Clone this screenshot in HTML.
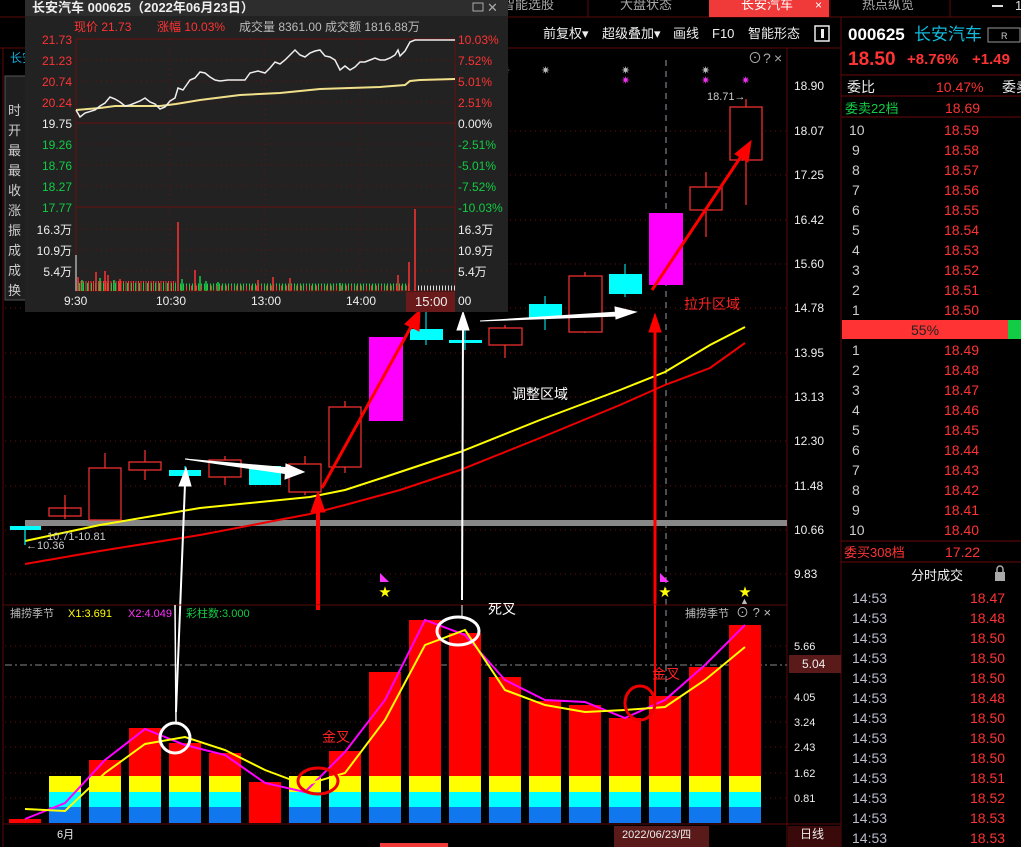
<!DOCTYPE html>
<html><head><meta charset="utf-8"><style>
*{margin:0;padding:0;box-sizing:border-box}
body{width:1021px;height:847px;background:#000;overflow:hidden;position:relative;font-family:"Liberation Sans","Noto Sans CJK SC",sans-serif;color:#ddd}
svg{position:absolute;left:0;top:0}
</style></head><body>
<svg width="1021" height="847" viewBox="0 0 1021 847" font-family="Liberation Sans, Noto Sans CJK SC, sans-serif">
<rect x="0" y="0" width="1021" height="17" fill="#000"/>
<line x1="0" y1="17" x2="1021" y2="17" stroke="#5a0a0a"/>
<line x1="588" y1="0" x2="588" y2="17" stroke="#5a0a0a"/>
<line x1="830" y1="0" x2="830" y2="17" stroke="#5a0a0a"/>
<line x1="950" y1="0" x2="950" y2="17" stroke="#5a0a0a"/>
<rect x="709" y="0" width="120" height="17" fill="#f03a3a"/>
<text x="502" y="9" fill="#aaa" font-size="13">智能选股</text>
<text x="620" y="9" fill="#aaa" font-size="13">大盘状态</text>
<text x="741" y="9" fill="#fff" font-size="13">长安汽车</text>
<text x="815" y="9" fill="#fff" font-size="12">×</text>
<text x="862" y="9" fill="#aaa" font-size="13">热点纵览</text>
<line x1="992" y1="6" x2="1003" y2="6" stroke="#ddd" stroke-width="2"/>
<text x="1015" y="10" fill="#ddd" font-size="13">1</text>
<line x1="0" y1="48" x2="841" y2="48" stroke="#5a0a0a"/>
<text x="543" y="38" fill="#eee" font-size="13">前复权▾</text>
<text x="602" y="38" fill="#eee" font-size="13">超级叠加▾</text>
<text x="673" y="38" fill="#eee" font-size="13">画线</text>
<text x="712" y="38" fill="#eee" font-size="13">F10</text>
<text x="748" y="38" fill="#eee" font-size="13">智能形态</text>
<rect x="815" y="26" width="14" height="15" fill="none" stroke="#eee" stroke-width="1.5"/>
<rect x="821" y="29" width="3" height="9" fill="#eee"/>
<line x1="787" y1="48" x2="787" y2="847" stroke="#5a0a0a"/>
<line x1="841" y1="17" x2="841" y2="847" stroke="#5a0a0a"/>
<line x1="3" y1="48" x2="3" y2="847" stroke="#5a0a0a"/>
<g stroke="#6a1010" stroke-dasharray="1,4">
<line x1="5" y1="131" x2="787" y2="131"/><line x1="5" y1="175" x2="787" y2="175"/>
<line x1="5" y1="220" x2="787" y2="220"/><line x1="5" y1="264" x2="787" y2="264"/>
<line x1="5" y1="308" x2="787" y2="308"/><line x1="5" y1="353" x2="787" y2="353"/>
<line x1="5" y1="397" x2="787" y2="397"/><line x1="5" y1="441" x2="787" y2="441"/>
<line x1="5" y1="486" x2="787" y2="486"/><line x1="5" y1="530" x2="787" y2="530"/>
<line x1="5" y1="574" x2="787" y2="574"/>
<line x1="5" y1="646" x2="787" y2="646"/><line x1="5" y1="697" x2="787" y2="697"/>
<line x1="5" y1="722" x2="787" y2="722"/><line x1="5" y1="747" x2="787" y2="747"/>
<line x1="5" y1="773" x2="787" y2="773"/><line x1="5" y1="798" x2="787" y2="798"/>
</g>
<g fill="#eee" font-size="12">
<text x="794" y="90">18.90</text><text x="794" y="135">18.07</text><text x="794" y="179">17.25</text>
<text x="794" y="224">16.42</text><text x="794" y="268">15.60</text><text x="794" y="312">14.78</text>
<text x="794" y="357">13.95</text><text x="794" y="401">13.13</text><text x="794" y="445">12.30</text>
<text x="794" y="490">11.48</text><text x="794" y="534">10.66</text><text x="794" y="578">9.83</text>
</g>
<g fill="#aaa" font-size="14"><text x="748" y="63">⊙</text><text x="763" y="63">?</text><text x="774" y="63">×</text></g>
<line x1="666" y1="60" x2="666" y2="823" stroke="#99a" stroke-dasharray="6,5"/>
<rect x="25" y="520" width="762" height="6" fill="#888"/>
<polyline fill="none" stroke="#ff0" stroke-width="2" points="25,541 100,525 200,508 310,497 345,490 385,477 460,452 540,420 620,390 665,372 710,345 745,327"/>
<polyline fill="none" stroke="#e00" stroke-width="2" points="25,564 100,551 200,535 310,514 345,505 400,490 460,470 540,438 620,405 665,385 710,368 745,343"/>
<g stroke="#f33" fill="none" stroke-width="1.2">
<line x1="25" y1="530" x2="25" y2="545" stroke="#0ff"/>
<line x1="65" y1="495" x2="65" y2="519"/><rect x="49" y="508" width="32" height="8"/>
<line x1="105" y1="453" x2="105" y2="521"/><rect x="89" y="468" width="32" height="52" fill="#000"/>
<line x1="145" y1="450" x2="145" y2="480"/><rect x="129" y="462" width="32" height="8" fill="#000"/>
<line x1="225" y1="456" x2="225" y2="485"/><rect x="209" y="460" width="32" height="17" fill="#000"/>
<line x1="305" y1="456" x2="305" y2="495"/><rect x="289" y="464" width="32" height="28" fill="#000"/>
<line x1="345" y1="401" x2="345" y2="473"/><rect x="329" y="407" width="32" height="60" fill="#000"/>
<line x1="505" y1="325" x2="505" y2="358"/><rect x="489" y="328" width="33" height="17" fill="#000"/>
<line x1="585" y1="272" x2="585" y2="333"/><rect x="569" y="276" width="33" height="56" fill="#000"/>
<line x1="706" y1="172" x2="706" y2="237"/><rect x="690" y="187" width="32" height="23" fill="#000"/>
<line x1="746" y1="99" x2="746" y2="205"/><rect x="730" y="107" width="32" height="53" fill="#000"/>
</g>
<g stroke="#0ff">
<line x1="426" y1="310" x2="426" y2="345"/><line x1="545" y1="296" x2="545" y2="330"/><line x1="625" y1="264" x2="625" y2="297"/>
<line x1="185" y1="466" x2="185" y2="478"/><line x1="465" y1="320" x2="465" y2="350"/>
</g>
<g fill="#0ff">
<rect x="10" y="526" width="31" height="4"/><rect x="169" y="470" width="32" height="6"/>
<rect x="249" y="466" width="32" height="19"/><rect x="410" y="329" width="33" height="11"/>
<rect x="449" y="340" width="33" height="3"/><rect x="529" y="304" width="33" height="14"/>
<rect x="609" y="274" width="33" height="20"/>
</g>
<rect x="369" y="337" width="34" height="84" fill="#f0f"/>
<rect x="649" y="213" width="34" height="72" fill="#f0f"/>
<text x="47" y="540" fill="#ccc" font-size="11">10.71-10.81</text>
<text x="26" y="549" fill="#ccc" font-size="11">←10.36</text>
<text x="707" y="100" fill="#ccc" font-size="11">18.71→</text>
<g fill="#bbb" font-size="11"><text x="501" y="74">✷</text><text x="541" y="74">✷</text><text x="621" y="74">✷</text><text x="701" y="74">✷</text></g>
<g fill="#e3e" font-size="11"><text x="621" y="84">✷</text><text x="701" y="84">✷</text><text x="741" y="84">✷</text></g>
<g fill="#ff0" font-size="12"><text x="379" y="596">★</text><text x="659" y="596">★</text><text x="739" y="596">★</text></g>
<g fill="#f3f" font-size="9"><text x="380" y="581">◣</text><text x="660" y="581">◣</text></g>
<text x="740" y="604" fill="#bbb" font-size="9">▲</text>
<text x="512" y="399" fill="#fff" font-size="14">调整区域</text>
<text x="684" y="309" fill="#f22" font-size="14">拉升区域</text>
<g stroke="#fff" fill="#fff">
<line x1="176" y1="712" x2="185" y2="484" stroke-width="2"/><polygon points="179,486 191,486 186,468"/>
<line x1="462" y1="600" x2="463" y2="328" stroke-width="2"/><polygon points="457,330 469,330 463,312"/>
<polygon points="185,459 290,468 288,474"/><polygon points="286,464 304,472 285,479"/>
<polygon points="480,321 618,312 618,316"/><polygon points="615,307 636,312 616,319"/>
</g>
<g stroke="#f00" fill="#f00">
<line x1="318" y1="610" x2="318" y2="510" stroke-width="4"/><polygon points="311,512 325,512 318,492"/>
<line x1="655" y1="605" x2="655" y2="330" stroke-width="3"/><polygon points="649,332 661,332 655,314"/>
<line x1="322" y1="488" x2="412" y2="325" stroke-width="3"/><polygon points="405,324 419,331 420,310"/>
<line x1="652" y1="290" x2="742" y2="155" stroke-width="3"/><polygon points="735,154 748,162 751,141"/>
</g>
<rect x="5" y="76" width="22" height="224" fill="#1f1f1f" stroke="#555"/>
<text x="10" y="62" fill="#1ad" font-size="12">长安</text>
<g fill="#ccc" font-size="13">
<text x="8" y="115">时</text><text x="8" y="135">开</text><text x="8" y="155">最</text><text x="8" y="175">最</text><text x="8" y="195">收</text><text x="8" y="215">涨</text><text x="8" y="235">振</text><text x="8" y="255">成</text><text x="8" y="275">成</text><text x="8" y="295">换</text>
</g>
<rect x="25" y="0" width="483" height="312" fill="#222"/>
<rect x="25" y="0" width="483" height="16" fill="#2d2d2d"/>
<text x="32" y="12" fill="#eee" font-size="13" font-weight="bold">长安汽车 000625（2022年06月23日）</text>
<rect x="473" y="3" width="10" height="8" fill="none" stroke="#aaa"/>
<text x="487" y="12" fill="#aaa" font-size="13">✕</text>
<text x="74" y="31" fill="#f33" font-size="12">现价 21.73</text>
<text x="157" y="31" fill="#f33" font-size="12">涨幅 10.03%</text>
<text x="239" y="31" fill="#bbb" font-size="12">成交量 8361.00  成交额 1816.88万</text>
<line x1="76" y1="39" x2="455" y2="39" stroke="#6a1010"/>
<line x1="76" y1="123" x2="455" y2="123" stroke="#6a1010"/>
<line x1="76" y1="207" x2="455" y2="207" stroke="#6a1010"/>
<line x1="76" y1="291" x2="455" y2="291" stroke="#6a1010"/>
<line x1="76" y1="39" x2="76" y2="291" stroke="#6a1010"/>
<line x1="455" y1="39" x2="455" y2="291" stroke="#6a1010"/>
<g stroke="#6a1010" stroke-dasharray="1,4">
<line x1="76" y1="60" x2="455" y2="60"/><line x1="76" y1="81" x2="455" y2="81"/><line x1="76" y1="102" x2="455" y2="102"/>
<line x1="76" y1="144" x2="455" y2="144"/><line x1="76" y1="165" x2="455" y2="165"/><line x1="76" y1="186" x2="455" y2="186"/>
<line x1="76" y1="229" x2="455" y2="229"/><line x1="76" y1="250" x2="455" y2="250"/><line x1="76" y1="271" x2="455" y2="271"/>
<line x1="170" y1="39" x2="170" y2="291"/><line x1="265" y1="39" x2="265" y2="291"/><line x1="360" y1="39" x2="360" y2="291"/>
</g>
<g font-size="12" text-anchor="end">
<text x="72" y="44" fill="#f33">21.73</text><text x="72" y="65" fill="#f33">21.23</text><text x="72" y="86" fill="#f33">20.74</text><text x="72" y="107" fill="#f33">20.24</text>
<text x="72" y="128" fill="#eee">19.75</text>
<text x="72" y="149" fill="#1c4">19.26</text><text x="72" y="170" fill="#1c4">18.76</text><text x="72" y="191" fill="#1c4">18.27</text><text x="72" y="212" fill="#1c4">17.77</text>
<text x="72" y="234" fill="#eee">16.3万</text><text x="72" y="255" fill="#eee">10.9万</text><text x="72" y="276" fill="#eee">5.4万</text>
</g>
<g font-size="12">
<text x="458" y="44" fill="#f33">10.03%</text><text x="458" y="65" fill="#f33">7.52%</text><text x="458" y="86" fill="#f33">5.01%</text><text x="458" y="107" fill="#f33">2.51%</text>
<text x="458" y="128" fill="#eee">0.00%</text>
<text x="458" y="149" fill="#1c4">-2.51%</text><text x="458" y="170" fill="#1c4">-5.01%</text><text x="458" y="191" fill="#1c4">-7.52%</text><text x="458" y="212" fill="#1c4">-10.03%</text>
<text x="458" y="234" fill="#eee">16.3万</text><text x="458" y="255" fill="#eee">10.9万</text><text x="458" y="276" fill="#eee">5.4万</text>
</g>
<polyline fill="none" stroke="#f0e08a" stroke-width="2" points="76,110 100,108 115,106 130,106 160,106 176,104 200,100 240,95 280,93 320,89 380,87 405,85 410,81 420,80 455,79"/>
<polyline fill="none" stroke="#eee" stroke-width="1.5" points="76,110 80,117 85,113 95,110 100,106 105,103 110,97 115,99 120,102 125,106 130,105 140,101 145,98 150,102 155,104 160,109 165,107 170,101 175,98 178,88 183,90 190,80 195,78 200,72 205,73 210,77 215,80 220,81 228,80 235,80 245,80 250,73 258,71 265,73 270,68 275,62 280,64 285,60 290,55 295,50 300,55 305,57 310,53 315,51 320,50 325,56 330,57 335,60 340,70 345,66 350,70 355,67 360,62 365,62 370,60 375,58 380,60 385,60 390,58 395,55 398,50 400,56 405,51 410,42 415,40 420,40 455,40"/>
<line x1="78" y1="286" x2="176" y2="286" stroke="#f33" stroke-width="10" stroke-dasharray="1,1.5"/>
<line x1="79" y1="287" x2="176" y2="287" stroke="#1c4" stroke-width="8" stroke-dasharray="1,3"/>
<line x1="180" y1="287" x2="410" y2="287" stroke="#1c4" stroke-width="7" stroke-dasharray="1,2"/>
<line x1="181" y1="288" x2="410" y2="288" stroke="#f33" stroke-width="5" stroke-dasharray="1,4"/>
<line x1="418" y1="288" x2="455" y2="288" stroke="#ddd" stroke-width="5" stroke-dasharray="1,2"/>
<g stroke-width="1.5">
<g stroke="#f33"><line x1="78" y1="291" x2="78" y2="277"/><line x1="96" y1="291" x2="96" y2="272"/><line x1="108" y1="291" x2="108" y2="275"/><line x1="178" y1="291" x2="178" y2="222"/><line x1="195" y1="291" x2="195" y2="270"/><line x1="258" y1="291" x2="258" y2="280"/><line x1="273" y1="291" x2="273" y2="277"/><line x1="290" y1="291" x2="290" y2="278"/><line x1="409" y1="291" x2="409" y2="262"/><line x1="415" y1="291" x2="415" y2="209"/><line x1="398" y1="291" x2="398" y2="275"/><line x1="105" y1="291" x2="105" y2="271"/><line x1="120" y1="291" x2="120" y2="279"/></g>
<g stroke="#1c4"><line x1="82" y1="291" x2="82" y2="280"/><line x1="100" y1="291" x2="100" y2="278"/><line x1="114" y1="291" x2="114" y2="280"/><line x1="182" y1="291" x2="182" y2="279"/><line x1="200" y1="291" x2="200" y2="276"/><line x1="206" y1="291" x2="206" y2="281"/><line x1="340" y1="291" x2="340" y2="283"/><line x1="218" y1="291" x2="218" y2="282"/></g>
</g>
<line x1="76" y1="291" x2="76" y2="255" stroke="#eee"/>
<rect x="406" y="292" width="49" height="20" fill="#6a1a1a"/>
<g font-size="12" fill="#eee"><text x="64" y="305">9:30</text><text x="156" y="305">10:30</text><text x="251" y="305">13:00</text><text x="346" y="305">14:00</text><text x="415" y="306" font-size="13">15:00</text><text x="458" y="305">00</text></g>
<line x1="3" y1="605" x2="787" y2="605" stroke="#5a0a0a"/>
<line x1="3" y1="824" x2="841" y2="824" stroke="#5a0a0a"/>
<line x1="5" y1="665" x2="787" y2="665" stroke="#888" stroke-dasharray="7,3,2,3"/>
<g font-size="11"><text x="10" y="617" fill="#bbb">捕捞季节</text><text x="68" y="617" fill="#ff0">X1:3.691</text><text x="128" y="617" fill="#f3f">X2:4.049</text><text x="186" y="617" fill="#1c4">彩柱数:3.000</text>
<text x="685" y="617" fill="#bbb">捕捞季节</text><text x="736" y="617" fill="#bbb" font-size="13">⊙ ? ×</text></g>
<g fill="#eee" font-size="11"><text x="794" y="650">5.66</text><text x="794" y="701">4.05</text><text x="794" y="726">3.24</text><text x="794" y="751">2.43</text><text x="794" y="777">1.62</text><text x="794" y="802">0.81</text></g>
<rect x="789" y="655" width="52" height="18" fill="#5a1a1a"/><text x="802" y="668" fill="#eee" font-size="12">5.04</text>
<rect x="9" y="819" width="32" height="4" fill="#f00"/>
<g fill="#ff0"><rect x="49" y="776" width="32" height="16"/><rect x="89" y="776" width="32" height="16"/><rect x="129" y="776" width="32" height="16"/><rect x="169" y="776" width="32" height="16"/><rect x="209" y="776" width="32" height="16"/><rect x="289" y="776" width="32" height="16"/><rect x="329" y="776" width="32" height="16"/><rect x="369" y="776" width="32" height="16"/><rect x="409" y="776" width="32" height="16"/><rect x="449" y="776" width="32" height="16"/><rect x="489" y="776" width="32" height="16"/><rect x="529" y="776" width="32" height="16"/><rect x="569" y="776" width="32" height="16"/><rect x="609" y="776" width="32" height="16"/><rect x="649" y="776" width="32" height="16"/><rect x="689" y="776" width="32" height="16"/><rect x="729" y="776" width="32" height="16"/></g>
<g fill="#0ff"><rect x="49" y="792" width="32" height="15"/><rect x="89" y="792" width="32" height="15"/><rect x="129" y="792" width="32" height="15"/><rect x="169" y="792" width="32" height="15"/><rect x="209" y="792" width="32" height="15"/><rect x="289" y="792" width="32" height="15"/><rect x="329" y="792" width="32" height="15"/><rect x="369" y="792" width="32" height="15"/><rect x="409" y="792" width="32" height="15"/><rect x="449" y="792" width="32" height="15"/><rect x="489" y="792" width="32" height="15"/><rect x="529" y="792" width="32" height="15"/><rect x="569" y="792" width="32" height="15"/><rect x="609" y="792" width="32" height="15"/><rect x="649" y="792" width="32" height="15"/><rect x="689" y="792" width="32" height="15"/><rect x="729" y="792" width="32" height="15"/></g>
<g fill="#1177ee"><rect x="49" y="807" width="32" height="16"/><rect x="89" y="807" width="32" height="16"/><rect x="129" y="807" width="32" height="16"/><rect x="169" y="807" width="32" height="16"/><rect x="209" y="807" width="32" height="16"/><rect x="289" y="807" width="32" height="16"/><rect x="329" y="807" width="32" height="16"/><rect x="369" y="807" width="32" height="16"/><rect x="409" y="807" width="32" height="16"/><rect x="449" y="807" width="32" height="16"/><rect x="489" y="807" width="32" height="16"/><rect x="529" y="807" width="32" height="16"/><rect x="569" y="807" width="32" height="16"/><rect x="609" y="807" width="32" height="16"/><rect x="649" y="807" width="32" height="16"/><rect x="689" y="807" width="32" height="16"/><rect x="729" y="807" width="32" height="16"/></g>
<g fill="#f00">
<rect x="89" y="760" width="32" height="16"/><rect x="129" y="728" width="32" height="48"/><rect x="169" y="743" width="32" height="33"/><rect x="209" y="753" width="32" height="23"/>
<rect x="249" y="782" width="32" height="41"/><rect x="329" y="751" width="32" height="25"/><rect x="369" y="672" width="32" height="104"/><rect x="409" y="620" width="32" height="156"/>
<rect x="449" y="633" width="32" height="143"/><rect x="489" y="677" width="32" height="99"/><rect x="529" y="701" width="32" height="75"/><rect x="569" y="705" width="32" height="71"/>
<rect x="609" y="718" width="32" height="58"/><rect x="649" y="696" width="32" height="80"/><rect x="689" y="667" width="32" height="109"/><rect x="729" y="625" width="32" height="151"/>
</g>
<line x1="318" y1="605" x2="318" y2="610" stroke="#f00" stroke-width="3"/>
<line x1="655" y1="605" x2="655" y2="700" stroke="#f00" stroke-width="2"/>
<line x1="462" y1="605" x2="462" y2="618" stroke="#fff"/>
<line x1="175" y1="605" x2="176" y2="722" stroke="#fff" stroke-width="1.5"/>
<polyline fill="none" stroke="#f0f" stroke-width="2" points="25,819 65,803 105,760 145,729 185,745 225,755 265,783 305,792 345,752 385,700 425,620 465,635 505,680 545,700 585,702 625,718 665,700 705,665 745,625"/>
<polyline fill="none" stroke="#ff0" stroke-width="2" points="25,809 65,811 105,773 145,744 185,737 225,750 265,770 305,785 345,773 385,720 425,645 465,630 505,690 545,705 585,712 625,710 665,707 705,680 745,647"/>
<ellipse cx="175" cy="738" rx="15" ry="15" fill="none" stroke="#fff" stroke-width="3"/>
<ellipse cx="458" cy="631" rx="21" ry="14" fill="none" stroke="#fff" stroke-width="3"/>
<ellipse cx="318" cy="781" rx="20" ry="13" fill="none" stroke="#e00" stroke-width="3"/>
<ellipse cx="640" cy="703" rx="15" ry="17" fill="none" stroke="#e00" stroke-width="3"/>
<text x="322" y="742" fill="#f22" font-size="14">金叉</text>
<text x="488" y="614" fill="#fff" font-size="14">死叉</text>
<text x="652" y="679" fill="#f22" font-size="14">金叉</text>
<text x="57" y="838" fill="#eee" font-size="11">6月</text>
<rect x="614" y="826" width="95" height="21" fill="#5a1a1a"/><text x="622" y="838" fill="#eee" font-size="11">2022/06/23/四</text>
<rect x="788" y="826" width="53" height="21" fill="#3a0a0a"/><text x="800" y="838" fill="#eee" font-size="12">日线</text>
<rect x="380" y="843" width="68" height="4" fill="#f03a3a"/>
<text x="848" y="40" fill="#fff" font-size="17" font-weight="bold">000625</text>
<text x="914" y="40" fill="#1bd" font-size="17">长安汽车</text>
<rect x="988" y="28" width="32" height="14" fill="none" stroke="#999"/><text x="1001" y="39" fill="#ccc" font-size="9">R</text>
<text x="848" y="65" fill="#f33" font-size="19" font-weight="bold">18.50</text>
<text x="907" y="64" fill="#f33" font-size="15" font-weight="bold">+8.76%</text>
<text x="972" y="64" fill="#f33" font-size="15" font-weight="bold">+1.49</text>
<g stroke="#6a0a0a"><line x1="841" y1="75" x2="1021" y2="75"/><line x1="841" y1="96" x2="1021" y2="96"/><line x1="841" y1="117" x2="1021" y2="117"/><line x1="841" y1="541" x2="1021" y2="541"/><line x1="841" y1="562" x2="1021" y2="562"/></g>
<text x="847" y="92" fill="#eee" font-size="14">委比</text><text x="936" y="92" fill="#f33" font-size="14">10.47%</text><text x="1002" y="92" fill="#eee" font-size="14">委卖</text>
<text x="845" y="113" fill="#1c4" font-size="13">委卖22档</text><text x="945" y="113" fill="#f33" font-size="14">18.69</text>
<g font-size="14">
<g fill="#ccc"><text x="849" y="135">10</text><text x="852" y="155">9</text><text x="852" y="175">8</text><text x="852" y="195">7</text><text x="852" y="215">6</text><text x="852" y="235">5</text><text x="852" y="255">4</text><text x="852" y="275">3</text><text x="852" y="295">2</text><text x="852" y="315">1</text></g>
<g fill="#f33"><text x="944" y="135">18.59</text><text x="944" y="155">18.58</text><text x="944" y="175">18.57</text><text x="944" y="195">18.56</text><text x="944" y="215">18.55</text><text x="944" y="235">18.54</text><text x="944" y="255">18.53</text><text x="944" y="275">18.52</text><text x="944" y="295">18.51</text><text x="944" y="315">18.50</text></g>
</g>
<rect x="842" y="320" width="166" height="19" fill="#f33"/><rect x="1008" y="320" width="13" height="19" fill="#1c4"/>
<text x="911" y="335" fill="#222" font-size="14">55%</text>
<g font-size="14">
<g fill="#ccc"><text x="852" y="355">1</text><text x="852" y="375">2</text><text x="852" y="395">3</text><text x="852" y="415">4</text><text x="852" y="435">5</text><text x="852" y="455">6</text><text x="852" y="475">7</text><text x="852" y="495">8</text><text x="852" y="515">9</text><text x="849" y="535">10</text></g>
<g fill="#f33"><text x="944" y="355">18.49</text><text x="944" y="375">18.48</text><text x="944" y="395">18.47</text><text x="944" y="415">18.46</text><text x="944" y="435">18.45</text><text x="944" y="455">18.44</text><text x="944" y="475">18.43</text><text x="944" y="495">18.42</text><text x="944" y="515">18.41</text><text x="944" y="535">18.40</text></g>
</g>
<text x="844" y="557" fill="#f33" font-size="13">委买308档</text><text x="945" y="557" fill="#f33" font-size="14">17.22</text>
<text x="911" y="580" fill="#eee" font-size="13">分时成交</text>
<rect x="995" y="572" width="10" height="9" fill="#aaa"/><path d="M997 572 v-3 a3 3 0 0 1 6 0 v3" fill="none" stroke="#aaa" stroke-width="1.5"/>
<g font-size="14" fill="#bbc">
<text x="852" y="603">14:53</text><text x="852" y="623">14:53</text><text x="852" y="643">14:53</text><text x="852" y="663">14:53</text><text x="852" y="683">14:53</text><text x="852" y="703">14:53</text><text x="852" y="723">14:53</text><text x="852" y="743">14:53</text><text x="852" y="763">14:53</text><text x="852" y="783">14:53</text><text x="852" y="803">14:53</text><text x="852" y="823">14:53</text><text x="852" y="843">14:53</text>
</g>
<g font-size="14" fill="#f33">
<text x="970" y="603">18.47</text><text x="970" y="623">18.48</text><text x="970" y="643">18.50</text><text x="970" y="663">18.50</text><text x="970" y="683">18.50</text><text x="970" y="703">18.48</text><text x="970" y="723">18.50</text><text x="970" y="743">18.50</text><text x="970" y="763">18.50</text><text x="970" y="783">18.51</text><text x="970" y="803">18.52</text><text x="970" y="823">18.53</text><text x="970" y="843">18.53</text>
</g>
</svg>
</body></html>
